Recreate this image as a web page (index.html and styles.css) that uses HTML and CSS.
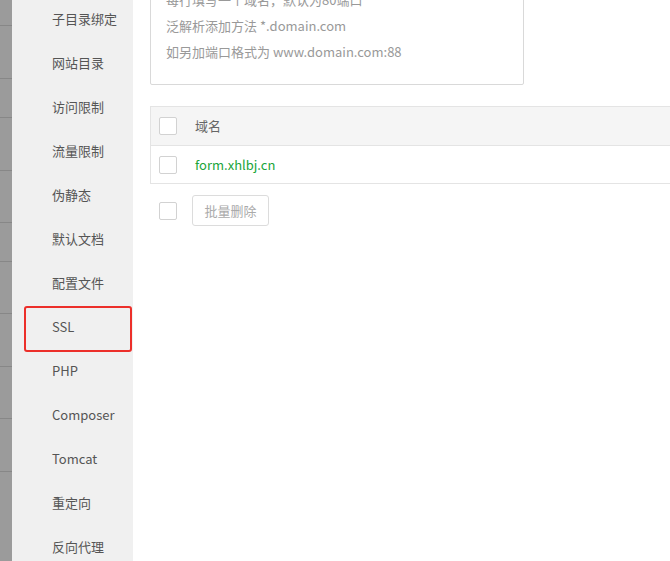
FILE: index.html
```html
<!DOCTYPE html>
<html lang="zh-CN">
<head>
<meta charset="utf-8">
<title>站点修改</title>
<link rel="stylesheet" href="styles.css">
</head>
<body>
<div class="page">
  <div class="strip">
    <div class="srow s-first"></div>
    <div class="srow s-tall"></div>
    <div class="srow s-short"></div>
    <div class="srow s-tall"></div>
    <div class="srow s-mid"></div>
    <div class="srow s-short"></div>
    <div class="srow s-mid"></div>
    <div class="srow s-tall"></div>
    <div class="srow s-mid"></div>
    <div class="srow s-tall"></div>
  </div>
  <ul class="sidebar">
    <li class="item">子目录绑定</li>
    <li class="item">网站目录</li>
    <li class="item">访问限制</li>
    <li class="item">流量限制</li>
    <li class="item">伪静态</li>
    <li class="item">默认文档</li>
    <li class="item">配置文件</li>
    <li class="item item-marked">SSL<span class="mark"></span></li>
    <li class="item">PHP</li>
    <li class="item">Composer</li>
    <li class="item">Tomcat</li>
    <li class="item">重定向</li>
    <li class="item">反向代理</li>
  </ul>
  <div class="main">
    <div class="domain-input">
      <div class="hint">每行填写一个域名，默认为80端口</div>
      <div class="hint">泛解析添加方法 *.domain.com</div>
      <div class="hint">如另加端口格式为 www.domain.com:88</div>
    </div>
    <div class="table">
      <div class="trow thead">
        <span class="checkbox"></span>
        <span class="cell">域名</span>
      </div>
      <div class="trow tbody">
        <span class="checkbox"></span>
        <span class="cell link">form.xhlbj.cn</span>
      </div>
    </div>
    <div class="footer">
      <span class="checkbox"></span>
      <button class="btn" type="button">批量删除</button>
    </div>
  </div>
</div>
</body>
</html>
```

FILE: styles.css
```css
html, body {
  margin: 0;
  padding: 0;
  background: #fff;
}
body {
  width: 670px;
  height: 561px;
  overflow: hidden;
  font-family: "Noto Sans CJK SC", "Liberation Sans", sans-serif;
  font-size: 13px;
}
.page {
  display: flex;
  height: 561px;
  overflow: hidden;
}
.strip {
  width: 12px;
  flex: none;
  background: #9b9b9b;
  display: flex;
  flex-direction: column;
}
.srow {
  border-bottom: 1px solid #878787;
  flex: none;
}
.s-first { height: 25px; }
.s-tall { height: 52px; }
.s-mid { height: 51px; }
.s-short { height: 38px; }

.sidebar {
  list-style: none;
  margin: -3px 0 0 0;
  padding: 0;
  width: 121px;
  flex: none;
  background: #f0f0f0;
  height: 570px;
}
.item {
  position: relative;
  height: 44px;
  line-height: 44px;
  padding-left: 40px;
  color: #555;
  white-space: nowrap;
}
.mark {
  position: absolute;
  left: 12px;
  top: 1px;
  width: 104px;
  height: 42px;
  border: 2px solid #ec2f2a;
  border-radius: 3px;
}

.main {
  flex: 1;
  padding-left: 17px;
  overflow: hidden;
}
.domain-input {
  width: 342px;
  margin-top: -20px;
  padding: 6px 15px 19px 15px;
  border: 1px solid #d9d9d9;
  border-radius: 2px;
}
.hint {
  line-height: 26px;
  color: #999;
  white-space: nowrap;
}
.table {
  margin-top: 21px;
  width: 640px;
  border: 1px solid #e4e4e4;
  border-right: none;
}
.trow {
  display: flex;
  align-items: center;
  padding-left: 8px;
}
.thead {
  height: 38px;
  background: #f5f5f5;
  border-bottom: 1px solid #e4e4e4;
  color: #666;
}
.tbody {
  height: 37px;
}
.checkbox {
  width: 16px;
  height: 16px;
  border: 1px solid #d2d2d2;
  border-radius: 2px;
  background: #fff;
  flex: none;
}
.cell {
  margin-left: 18px;
  line-height: 20px;
}
.link {
  color: #20a53a;
}
.footer {
  display: flex;
  align-items: center;
  margin-top: 11px;
  padding-left: 9px;
  gap: 15px;
}
.btn {
  width: 77px;
  height: 31px;
  padding: 0;
  border: 1px solid #dcdcdc;
  border-radius: 3px;
  background: #fff;
  color: #aaa;
  font-family: "Noto Sans CJK SC", "Liberation Sans", sans-serif;
  font-size: 13px;
  line-height: 29px;
}
```
